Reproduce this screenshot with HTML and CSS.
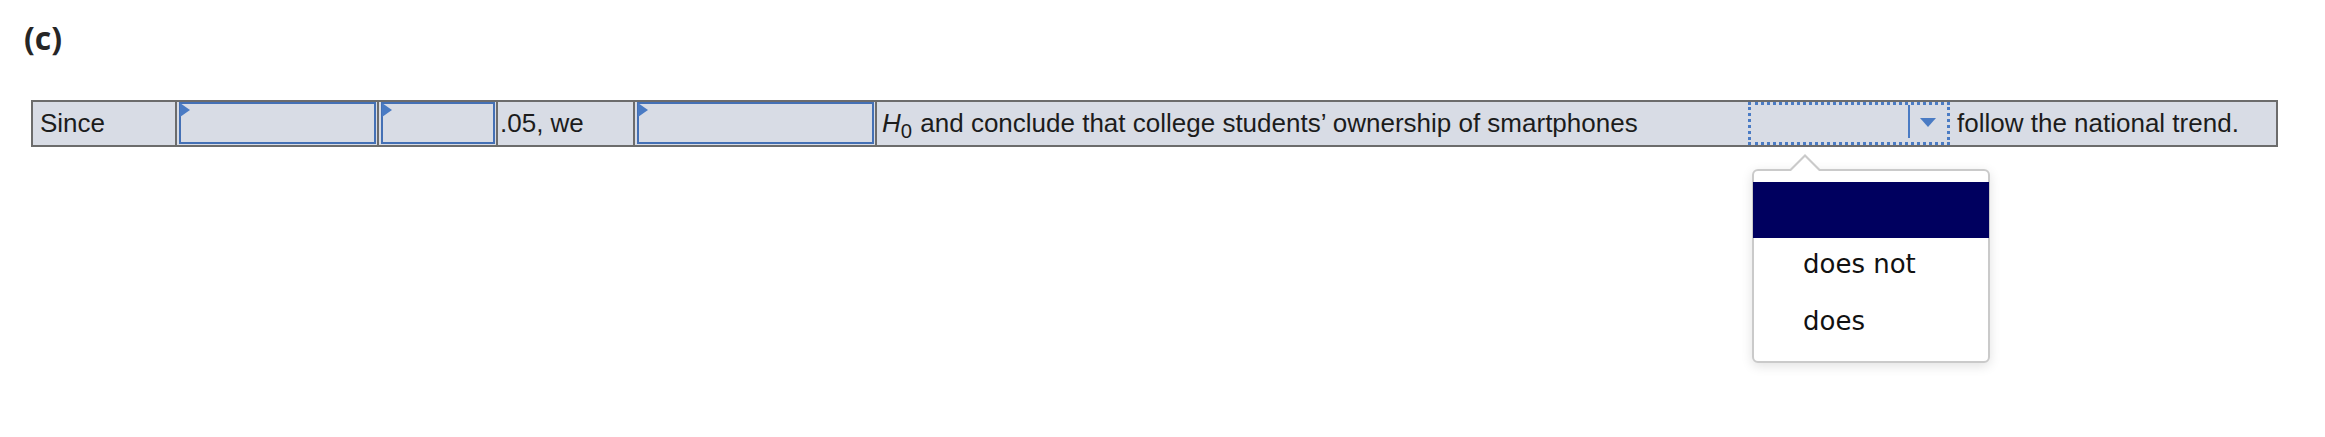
FILE: index.html
```html
<!DOCTYPE html>
<html>
<head>
<meta charset="utf-8">
<link rel="stylesheet" href="styles.css">
</head>
<body>
<div class="page">
  <h2 class="part">(c)</h2>
  <div class="sentence">
    <div class="cell txt since">Since</div>
    <div class="cell inp w1"><div class="box"></div></div>
    <div class="cell inp w2"><div class="box"></div></div>
    <div class="cell txt we">.05, we</div>
    <div class="cell inp w3"><div class="box"></div></div>
    <div class="cell txt h0"><span><i>H</i><sub>0</sub> and conclude that college students’ ownership of smartphones</span></div>
    <div class="cell dropdown">
      <div class="dd-value"></div>
      <div class="dd-btn"><span class="caret"></span></div>
      <div class="menu">
        <div class="opt selected"></div>
        <div class="opt">does not</div>
        <div class="opt">does</div>
      </div>
    </div>
    <div class="cell txt follow">follow the national trend.</div>
  </div>
</div>
</body>
</html>
```
FILE: styles.css
```css
html, body {
  margin: 0;
  padding: 0;
  background: #ffffff;
}
.page {
  width: 2325px;
  height: 437px;
  box-sizing: border-box;
}
.part {
  margin: 0;
  padding: 18px 0 0 24px;
  height: 40px;
  font-family: "Open Sans", sans-serif;
  font-weight: 700;
  font-size: 32px;
  line-height: 40px;
  color: #262626;
}
.sentence {
  margin: 42px 0 0 31px;
  width: 2247px;
  height: 47px;
  box-sizing: border-box;
  border: 2px solid #6c6c6c;
  background: #d8dce5;
  display: flex;
  font-family: "Liberation Sans", Arial, sans-serif;
  font-size: 26px;
  color: #1c1c1c;
}
.cell {
  box-sizing: border-box;
  height: 100%;
  display: flex;
  align-items: center;
  border-right: 2px solid #6c6c6c;
  flex: none;
}
.since { width: 144px; padding-left: 7px; }
.w1 { width: 202px; }
.w2 { width: 119px; }
.we { width: 137px; padding-left: 2px; }
.w3 { width: 242px; }
.h0 { width: 871px; padding-left: 5px; border-right: none; }
.follow { flex: 1; padding-left: 7px; border-right: none; }
.h0 sub {
  font-size: 0.78em;
  vertical-align: -0.28em;
  line-height: 0;
  margin-right: 1px;
}
.inp {
  padding: 0 1px 1px 2px;
  align-items: stretch;
}
.box {
  flex: 1;
  position: relative;
  border: 2px solid #4470b5;
  background: #d8dce5;
}
.box::before {
  content: "";
  position: absolute;
  left: -1px;
  top: -1px;
  border-top: 7px solid transparent;
  border-bottom: 7px solid transparent;
  border-left: 10px solid #4a7bc4;
}
.dropdown {
  width: 202px;
  border: 3px dotted #4a7bc4;
  position: relative;
  align-items: stretch;
}
.dd-value {
  width: 157px;
  border-right: 2px solid #4a7bc4;
  margin: 0 0 4px 0;
}
.dd-btn {
  flex: 1;
  display: flex;
  align-items: center;
  justify-content: center;
}
.caret {
  display: block;
  width: 0;
  height: 0;
  margin-left: -1px;
  margin-bottom: 3px;
  border-left: 8px solid transparent;
  border-right: 8px solid transparent;
  border-top: 9px solid #4a7bc4;
}
.menu {
  position: absolute;
  left: 1px;
  top: 64px;
  width: 238px;
  height: 194px;
  box-sizing: border-box;
  background: #ffffff;
  border: 2px solid #cacaca;
  border-radius: 6px;
  box-shadow: 0 3px 12px rgba(0, 0, 0, 0.12);
  padding-top: 11px;
  font-family: "DejaVu Sans", Verdana, sans-serif;
  font-size: 26px;
  color: #111111;
}
.menu::before {
  content: "";
  position: absolute;
  left: 34px;
  top: -17px;
  border-left: 17px solid transparent;
  border-right: 17px solid transparent;
  border-bottom: 17px solid #cacaca;
}
.menu::after {
  content: "";
  position: absolute;
  left: 36px;
  top: -14px;
  border-left: 15px solid transparent;
  border-right: 15px solid transparent;
  border-bottom: 15px solid #ffffff;
}
.opt {
  height: 57px;
  display: flex;
  align-items: center;
  padding-left: 49px;
  padding-bottom: 5px;
  box-sizing: border-box;
}
.opt.selected {
  height: 56px;
  padding-bottom: 0;
  background: #00005f;
  margin: 0 -1px;
}
```
